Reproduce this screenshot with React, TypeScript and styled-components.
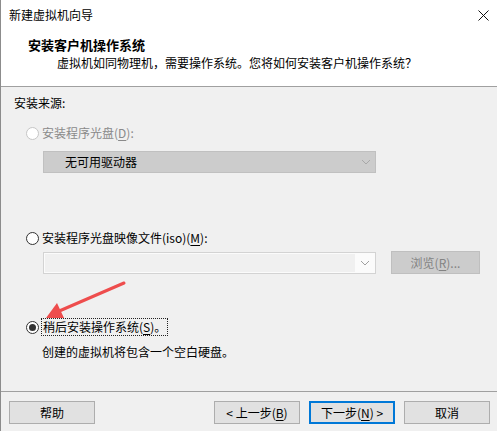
import React from 'react';
import styled, { createGlobalStyle } from 'styled-components';

const Global = createGlobalStyle`
  html, body { margin: 0; padding: 0; background: #f0f0f0; }
  body {
    font-family: "Noto Sans CJK SC", "Noto Sans", sans-serif;
    font-size: 12px;
    color: #000;
  }
  * { box-sizing: border-box; }
`;

const Window = styled.div`
  position: relative;
  width: 497px;
  height: 431px;
  border-left: 1px solid #8c8c8c;
  background: #f0f0f0;
  display: flex;
  flex-direction: column;
  overflow: hidden;
`;

const TitleBar = styled.div`
  height: 30px;
  background: #fff;
  display: flex;
  align-items: center;
  justify-content: space-between;
  padding: 0 8px 0 8px;
  font-size: 12px;
  line-height: 16px;
`;

const Header = styled.div`
  height: 57px;
  background: #fff;
  border-bottom: 1px solid #a0a0a0;
  padding-top: 7px;
  display: flex;
  flex-direction: column;
  gap: 2px;
`;

const Heading = styled.div`
  margin-left: 27px;
  font-size: 13px;
  font-weight: bold;
  line-height: 16px;
`;

const Subtitle = styled.div`
  margin-left: 56px;
  line-height: 16px;
`;

const Body = styled.div`
  flex: 1;
  padding: 8px 0 0 13px;
  display: flex;
  flex-direction: column;
`;

const Line = styled.div<{ $top?: number; $left?: number }>`
  margin-top: ${p => p.$top ?? 0}px;
  margin-left: ${p => p.$left ?? 0}px;
  line-height: 16px;
  height: 16px;
  white-space: nowrap;
`;

const RadioRow = styled.div<{ $top: number; $disabled?: boolean }>`
  margin-top: ${p => p.$top}px;
  margin-left: 12px;
  height: 16px;
  display: flex;
  align-items: center;
  gap: 3px;
  line-height: 16px;
  color: ${p => (p.$disabled ? '#8a8a8a' : '#000')};
  white-space: nowrap;
`;

const RadioCircle = styled.span<{ $checked?: boolean; $disabled?: boolean }>`
  width: 13px;
  height: 13px;
  border-radius: 50%;
  border: 1px solid ${p => (p.$disabled ? '#c6c6c6' : '#333')};
  background: #fff;
  display: flex;
  align-items: center;
  justify-content: center;
  flex: none;
  &::after {
    content: '';
    display: ${p => (p.$checked ? 'block' : 'none')};
    width: 7px;
    height: 7px;
    border-radius: 50%;
    background: #333;
  }
`;

const Focus = styled.span`
  outline: 1px dotted #222;
  outline-offset: 0px;
  padding: 0 1px;
`;

const U = styled.span`
  text-decoration: underline;
  text-underline-offset: 2px;
`;

const DisabledSelect = styled.div`
  margin-top: 10px;
  margin-left: 29px;
  width: 333px;
  height: 22px;
  background: #cccccc;
  border: 1px solid #c0c0c0;
  display: flex;
  align-items: center;
  justify-content: space-between;
  padding: 0 4px 0 21px;
  line-height: 16px;
`;

const IsoRow = styled.div`
  margin-top: 5px;
  margin-left: 29px;
  display: flex;
  align-items: flex-start;
  height: 23px;
`;

const Combo = styled.div`
  margin-top: 1px;
  width: 333px;
  height: 22px;
  border: 1px solid #d3d3d3;
  background: #fbfbfb;
  display: flex;
  padding: 1px;
`;

const ComboField = styled.div`
  flex: 1;
  background: #f0f0f0;
`;

const ComboArrow = styled.div`
  width: 19px;
  display: flex;
  align-items: center;
  justify-content: center;
`;

const BrowseButton = styled.div`
  margin-left: 15px;
  width: 89px;
  height: 23px;
  background: #cccccc;
  border: 1px solid #bfbfbf;
  color: #838383;
  display: flex;
  align-items: center;
  justify-content: center;
  line-height: 16px;
`;

const Footer = styled.div`
  height: 40px;
  border-top: 1px solid #a0a0a0;
  padding: 9px 7px 0 8px;
  display: flex;
  align-items: flex-start;
`;

const Button = styled.div<{ $default?: boolean }>`
  width: 86px;
  height: 23px;
  background: #e1e1e1;
  border: ${p => (p.$default ? '2px solid #0078d7' : '1px solid #adadad')};
  display: flex;
  align-items: center;
  justify-content: center;
  line-height: 16px;
  white-space: nowrap;
`;

const ButtonGroup = styled.div`
  margin-left: auto;
  display: flex;
  gap: 9px;
`;

const ArrowOverlay = styled.svg`
  position: absolute;
  left: 0;
  top: 0;
  pointer-events: none;
`;

const Chevron = ({ color }: { color: string }) => (
  <svg width="10" height="6" viewBox="0 0 10 6">
    <path d="M1 1 L5 5 L9 1" fill="none" stroke={color} strokeWidth="1" />
  </svg>
);

export default function App() {
  return (
    <>
      <Global />
      <Window>
        <TitleBar>
          <span>新建虚拟机向导</span>
          <svg width="11" height="11" viewBox="0 0 11 11">
            <path d="M0.5 0.5 L10.5 10.5 M10.5 0.5 L0.5 10.5" stroke="#111" strokeWidth="1" />
          </svg>
        </TitleBar>
        <Header>
          <Heading>安装客户机操作系统</Heading>
          <Subtitle>虚拟机如同物理机，需要操作系统。您将如何安装客户机操作系统？</Subtitle>
        </Header>
        <Body>
          <Line>安装来源:</Line>
          <RadioRow $top={14} $disabled>
            <RadioCircle $disabled />
            <span>
              安装程序光盘(<U>D</U>):
            </span>
          </RadioRow>
          <DisabledSelect>
            <span>无可用驱动器</span>
            <Chevron color="#a8a8a8" />
          </DisabledSelect>
          <RadioRow $top={57}>
            <RadioCircle />
            <span>
              安装程序光盘映像文件(iso)(<U>M</U>):
            </span>
          </RadioRow>
          <IsoRow>
            <Combo>
              <ComboField />
              <ComboArrow>
                <Chevron color="#a0a0a0" />
              </ComboArrow>
            </Combo>
            <BrowseButton>
              浏览(<U>R</U>)...
            </BrowseButton>
          </IsoRow>
          <RadioRow $top={45}>
            <RadioCircle $checked />
            <Focus>
              稍后安装操作系统(<U>S</U>)。
            </Focus>
          </RadioRow>
          <Line $top={9} $left={28}>
            创建的虚拟机将包含一个空白硬盘。
          </Line>
        </Body>
        <Footer>
          <Button>帮助</Button>
          <ButtonGroup>
            <Button>
              &lt; 上一步(<U>B</U>)
            </Button>
            <Button $default>
              下一步(<U>N</U>) &gt;
            </Button>
            <Button>取消</Button>
          </ButtonGroup>
        </Footer>
        <ArrowOverlay width="497" height="431" viewBox="0 0 497 431">
          <line x1="123" y1="283" x2="56" y2="312" stroke="#ee4d4d" strokeWidth="3" strokeLinecap="round" />
          <polygon points="45,318 56,303 63,318" fill="#ee4d4d" />
        </ArrowOverlay>
      </Window>
    </>
  );
}
